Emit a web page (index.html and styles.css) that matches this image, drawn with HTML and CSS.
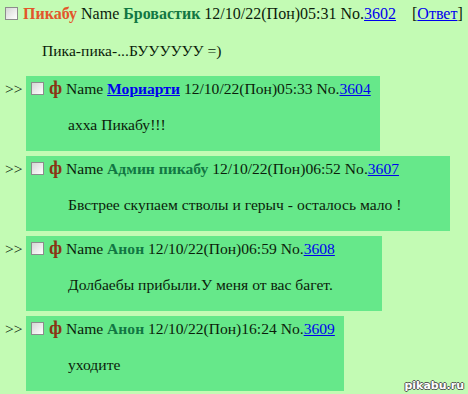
FILE: index.html
```
<!DOCTYPE html>
<html lang="ru">
<head>
    <meta charset="UTF-8">
    <meta name="viewport" content="width=device-width, initial-scale=1.0">
    <title>Пикабу</title>
    <link rel="stylesheet" href="styles.css">
</head>
<body>
    <div class="thread">
        <div class="post-head op-head">
            <input class="check" type="checkbox">
            <span class="title">Пикабу</span>
            <span class="poster">Name</span>
            <span class="postername">Бровастик</span>
            12/10/22(Пон)05:31
            <span class="reflink">No.<a href="#">3602</a></span>
            <span class="answer">[<a href="#">Ответ</a>]</span>
        </div>
        <blockquote class="op-text">Пика-пика-...БУУУУУУ =)</blockquote>

        <div class="reply-row">
            <div class="doubledash">&gt;&gt;</div>
            <div class="reply">
                <div class="post-head">
                    <input class="check" type="checkbox">
                    <span class="replytitle">ф</span>
                    <span class="poster">Name</span>
                    <a class="postername" href="#">Мориарти</a>
                    12/10/22(Пон)05:33
                    <span class="reflink">No.<a href="#">3604</a></span>
                </div>
                <blockquote>ахха Пикабу!!!</blockquote>
            </div>
        </div>

        <div class="reply-row">
            <div class="doubledash">&gt;&gt;</div>
            <div class="reply">
                <div class="post-head">
                    <input class="check" type="checkbox">
                    <span class="replytitle">ф</span>
                    <span class="poster">Name</span>
                    <span class="postername">Админ пикабу</span>
                    12/10/22(Пон)06:52
                    <span class="reflink">No.<a href="#">3607</a></span>
                </div>
                <blockquote>Бвстрее скупаем стволы и герыч - осталось мало !</blockquote>
            </div>
        </div>

        <div class="reply-row">
            <div class="doubledash">&gt;&gt;</div>
            <div class="reply">
                <div class="post-head">
                    <input class="check" type="checkbox">
                    <span class="replytitle">ф</span>
                    <span class="poster">Name</span>
                    <span class="postername">Анон</span>
                    12/10/22(Пон)06:59
                    <span class="reflink">No.<a href="#">3608</a></span>
                </div>
                <blockquote>Долбаебы прибыли.У меня от вас багет.</blockquote>
            </div>
        </div>

        <div class="reply-row">
            <div class="doubledash">&gt;&gt;</div>
            <div class="reply">
                <div class="post-head">
                    <input class="check" type="checkbox">
                    <span class="replytitle">ф</span>
                    <span class="poster">Name</span>
                    <span class="postername">Анон</span>
                    12/10/22(Пон)16:24
                    <span class="reflink">No.<a href="#">3609</a></span>
                </div>
                <blockquote>уходите</blockquote>
            </div>
        </div>
    </div>

    <div class="watermark">pikabu.ru</div>
</body>
</html>
```

FILE: styles.css
```
body {
    margin: 2px;
    background-color: #c3fbb4;
    color: #0b1d0b;
    font-family: "Liberation Serif", "DejaVu Serif", serif;
    font-size: 15.6px;
    overflow: hidden;
}

a {
    color: #0000ee;
}

.post-head {
    line-height: 19px;
    padding-top: 2px;
    white-space: nowrap;
}

.op-head {
    font-size: 16px;
}

.check {
    appearance: none;
    -webkit-appearance: none;
    width: 13px;
    height: 13px;
    margin: 3px 1px 0 3px;
    vertical-align: -1px;
    border: 1px solid #8c8c8c;
    background: linear-gradient(135deg, #d6d6d6, #ffffff);
}

.title {
    font-weight: bold;
    color: #e2562a;
}

.replytitle {
    font-weight: bold;
    font-size: 19px;
    color: #8b3414;
}

.postername {
    font-weight: bold;
    color: #117743;
}

a.postername {
    color: #0000ee;
}

.answer {
    margin-left: 12px;
}

blockquote {
    margin: 17px 40px 15px 40px;
    line-height: 19px;
}

.op-text {
    margin-top: 18px;
    margin-bottom: 16px;
}

.reply-row {
    display: flex;
    align-items: flex-start;
    margin-top: 5px;
}

.doubledash {
    width: 21px;
    padding-left: 3px;
    padding-top: 3px;
    line-height: 19px;
}

.reply {
    background-color: #66e88a;
    padding: 0 9px 2px 2px;
}

.watermark {
    position: absolute;
    right: 4px;
    bottom: 2px;
    font-family: "DejaVu Sans", sans-serif;
    font-weight: bold;
    font-size: 11px;
    color: #ffffff;
    text-shadow: 1px 0 #555, -1px 0 #555, 0 1px #555, 0 -1px #555;
}
```
